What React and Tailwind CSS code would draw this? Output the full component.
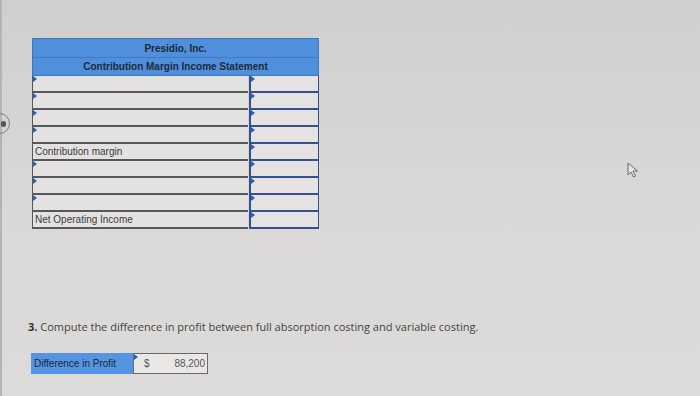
import React from "react";

const rows = [
  { label: "" },
  { label: "" },
  { label: "" },
  { label: "" },
  { label: "Contribution margin", fixed: true },
  { label: "" },
  { label: "" },
  { label: "" },
  { label: "Net Operating Income", fixed: true },
];

const Flag = () => (
  <span className="absolute left-0 top-0 w-0 h-0 border-t-[3px] border-b-[3px] border-l-[4px] border-t-transparent border-b-transparent border-l-[#2f5db0]" />
);

const Row = ({ label, fixed }) => (
  <div className="flex h-[17px]">
    <div
      className={`relative w-[216px] h-full border-l border-b-2 border-[#55575c] bg-[#e3e2e0] flex items-center px-[2px] ${
        fixed ? "border-b border-[#8a8a8a]" : ""
      }`}
    >
      {!fixed && <Flag />}
      <span className="text-[10px] text-[#3a3a3a] leading-none">{label}</span>
    </div>
    <div className="relative flex-1 h-full border-l-2 border-r border-b-2 border-[#34508f] bg-[#e4e3e1] ml-[1px]">
      <Flag />
    </div>
  </div>
);

export default function App() {
  return (
    <div
      className="relative w-[700px] h-[396px] overflow-hidden bg-gradient-to-b from-[#d0cfcd] via-[#d9d8d6] to-[#dcdbd9]"
      style={{ fontFamily: "'Liberation Sans', Arial, sans-serif" }}
    >
      <div className="absolute left-0 top-0 w-[2px] h-full bg-[#b5b4b2]" />
      <div className="absolute -left-[11px] top-[113px] w-[21px] h-[21px] rounded-full border border-[#7c7c7c] flex items-center justify-end pr-[3px]">
        <span className="w-[5px] h-[6px] bg-[#555] rounded-full" />
      </div>

      <div className="pt-[38px] pl-[32px]">
        <div className="w-[287px]">
          <div className="bg-[#4f8fdb] border border-[#3c78c2]">
            <div className="h-[19px] flex items-center justify-center border-b border-[#3f7bc6] text-[10px] font-bold text-[#1d2a3c]">
              Presidio, Inc.
            </div>
            <div className="h-[17px] flex items-center justify-center text-[10px] font-bold text-[#1d2a3c]">
              Contribution Margin Income Statement
            </div>
          </div>
          {rows.map((r, i) => (
            <Row key={i} {...r} />
          ))}
        </div>
      </div>

      <svg
        className="absolute left-[627px] top-[162px]"
        width="12"
        height="16"
        viewBox="0 0 12 16"
      >
        <path
          d="M1 1 L1 13 L4 10 L6.5 15 L8.5 14 L6 9 L10.5 9 Z"
          fill="#e6e5e3"
          stroke="#6a6a6a"
          strokeWidth="1"
          strokeLinejoin="round"
        />
      </svg>

      <p
        className="mt-[90px] ml-[28px] text-[11px] text-[#444]"
        style={{ fontFamily: "'Open Sans', sans-serif" }}
      >
        <span className="font-bold text-[#333]">3.</span> Compute the difference in profit between full absorption costing and variable costing.
      </p>

      <div className="mt-[17px] ml-[31px] flex h-[21px] w-[177px]">
        <div className="w-[102px] bg-[#5594e0] flex items-center pl-[3px] text-[10px] text-[#1d2a3c]">
          Difference in Profit
        </div>
        <div className="relative flex-1 bg-[#e9e8e6] border border-[#6a6a6a] flex items-center justify-between pl-[10px] pr-[2px] text-[10px] text-[#555]">
          <Flag />
          <span>$</span>
          <span>88,200</span>
        </div>
      </div>
    </div>
  );
}
